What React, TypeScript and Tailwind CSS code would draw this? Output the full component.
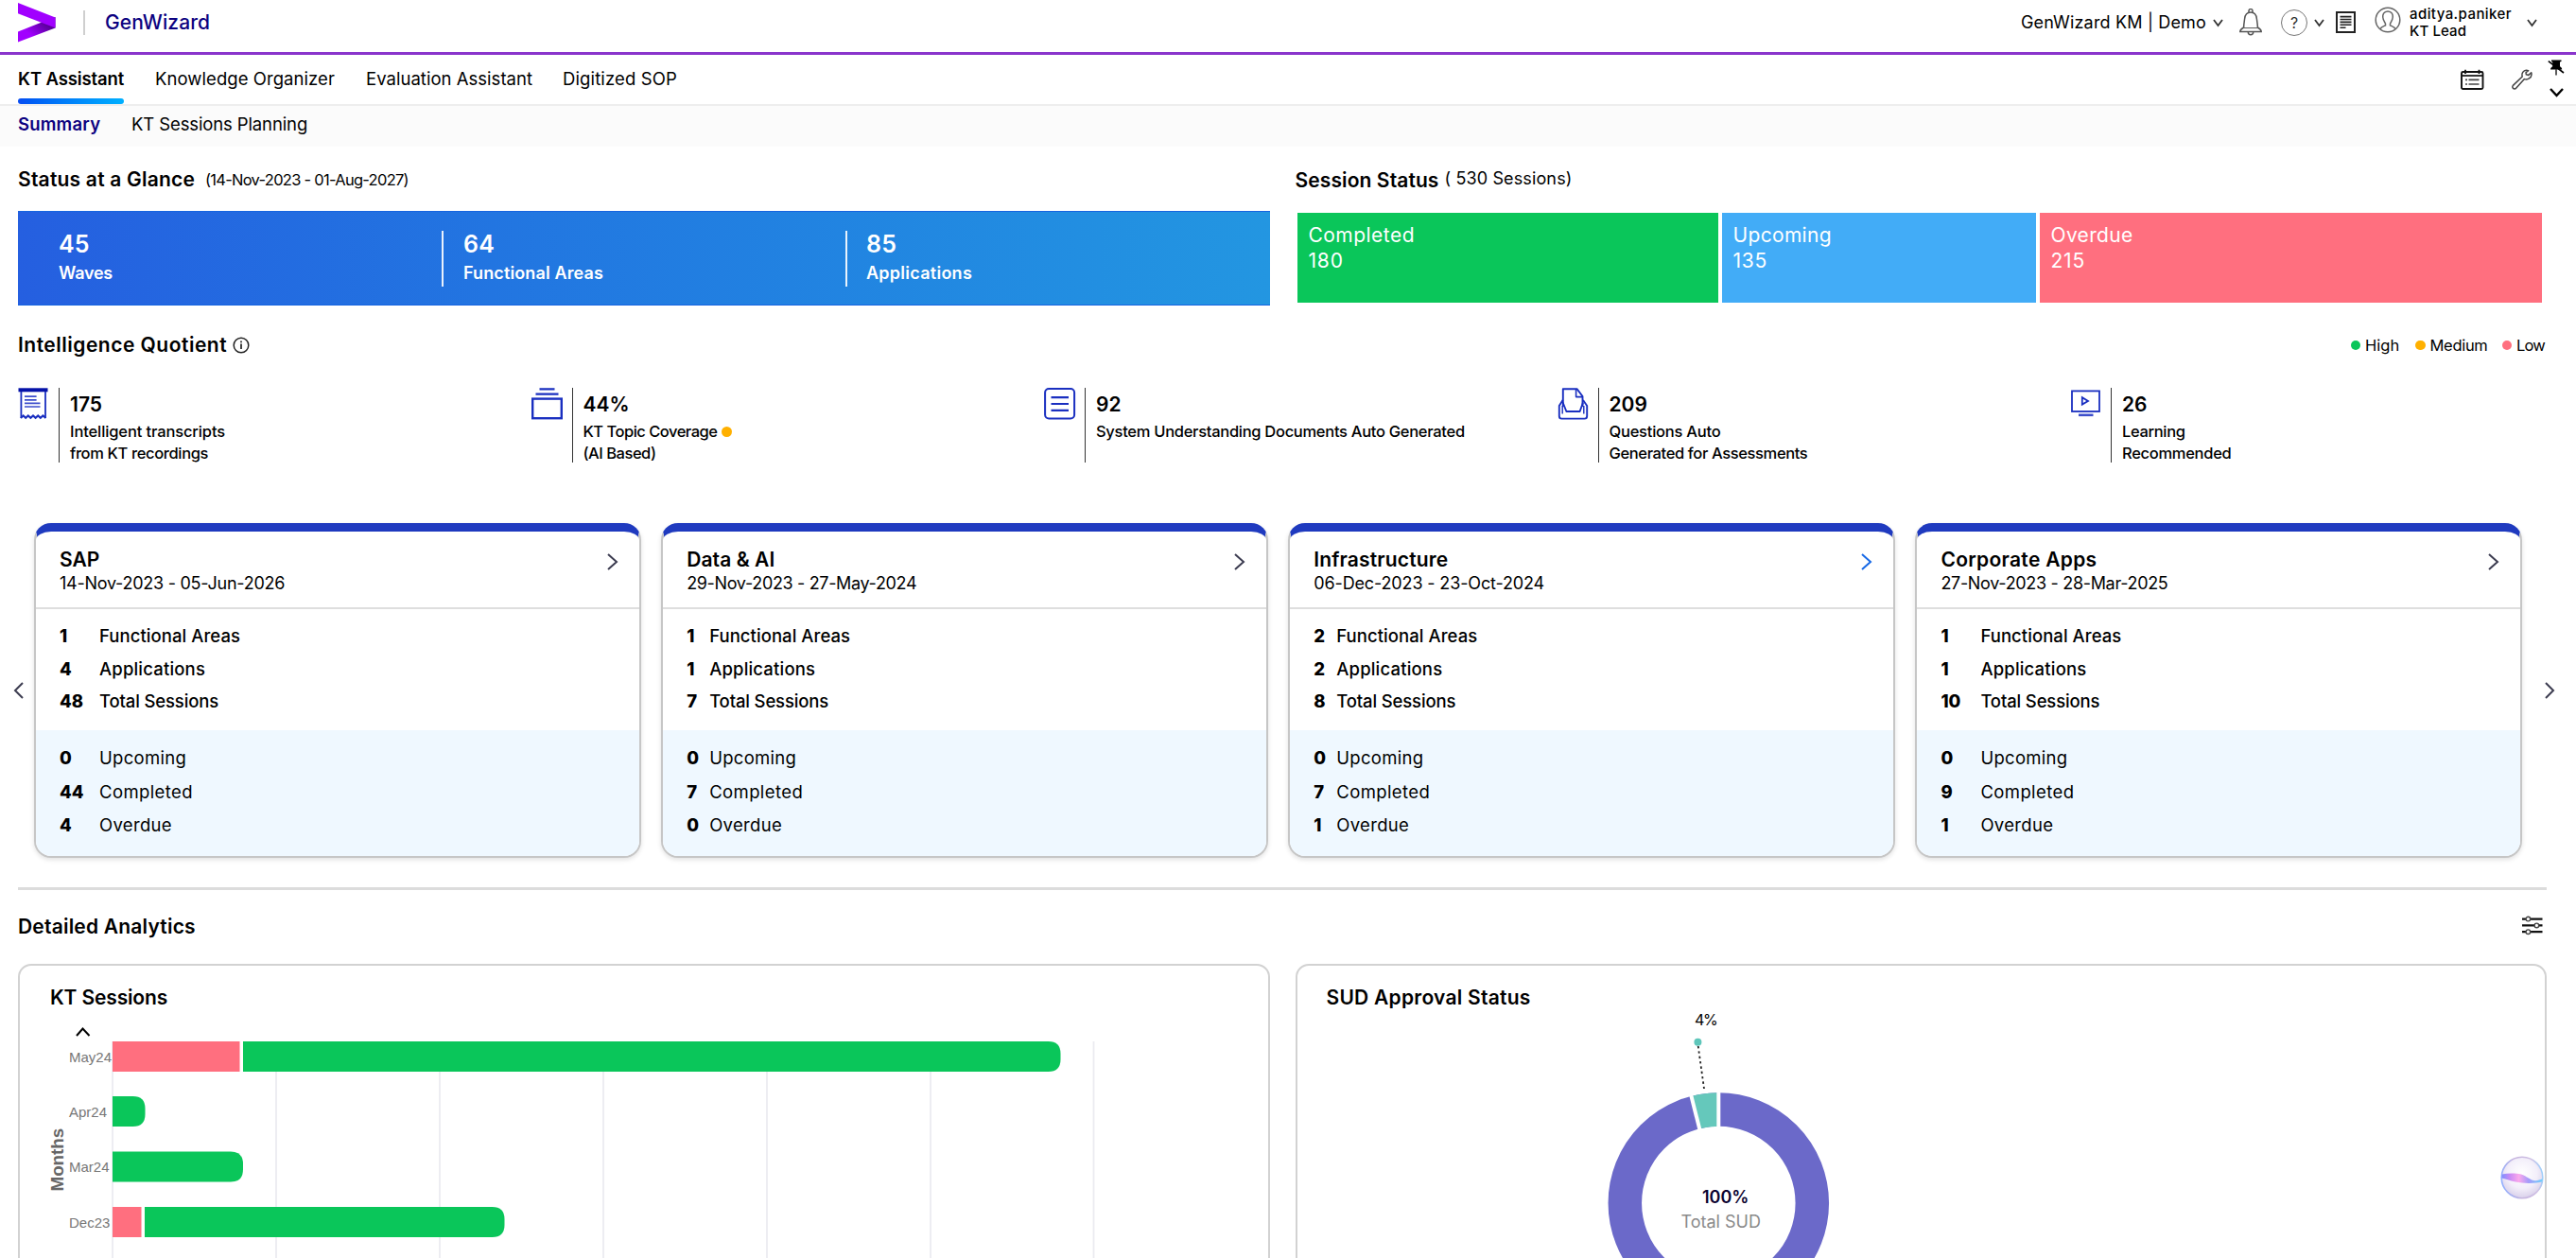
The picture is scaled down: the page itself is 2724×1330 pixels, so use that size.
import React from "react";

const heading = "text-[21px] font-semibold text-black whitespace-nowrap";

function Chevron({ w, h, dir, stroke = "#333", sw = 1.8 }: { w: number; h: number; dir: "down" | "up" | "left" | "right"; stroke?: string; sw?: number }) {
  const points = {
    down: `1,1 ${w / 2},${h - 1} ${w - 1},1`,
    up: `1,${h - 1} ${w / 2},1 ${w - 1},${h - 1}`,
    left: `${w - 1},1 1,${h / 2} ${w - 1},${h - 1}`,
    right: `1,1 ${w - 1},${h / 2} 1,${h - 1}`,
  }[dir];
  return (
    <svg width={w} height={h} viewBox={`0 0 ${w} ${h}`} fill="none" className="shrink-0 overflow-visible">
      <polyline points={points} stroke={stroke} strokeWidth={sw} />
    </svg>
  );
}

function Logo() {
  return (
    <svg width="40" height="42" viewBox="0 0 40 42" className="shrink-0">
      <defs>
        <linearGradient id="fold" x1="0" y1="0.9" x2="1" y2="0.1">
          <stop offset="0.3" stopColor="#a100ff" />
          <stop offset="0.85" stopColor="#4c0087" />
        </linearGradient>
      </defs>
      <path d="M0 30.5 L24.5 20.8 L39.5 15 V26.5 L0 41.5 Z" fill="url(#fold)" />
      <path d="M0 0 L39.5 15.5 V26.5 L24.5 20.8 L0 11.3 Z" fill="#a100ff" />
    </svg>
  );
}

function BellIcon() {
  return (
    <svg width="24" height="29" viewBox="0 0 24 29" fill="none" stroke="#555" strokeWidth="1.5" className="shrink-0">
      <path d="M10 4.2 V2.6 a2 2 0 0 1 4 0 V4.2" />
      <path d="M4.6 20.5 C4.6 17 5.2 14 5.6 11 C6 6.6 8.4 4 12 4 S18 6.6 18.4 11 C18.8 14 19.4 17 19.4 20.5" />
      <path d="M4.6 20 C2 21.5 0.8 22.3 0.8 24.6 H23.2 C23.2 22.3 22 21.5 19.4 20" />
      <path d="M4.4 20.6 H19.6" strokeWidth="1" />
      <path d="M9.3 25 a2.7 2.7 0 0 0 5.4 0" />
    </svg>
  );
}

function HelpIcon() {
  return (
    <span className="flex size-[28px] shrink-0 items-center justify-center rounded-full border-[1.5px] border-[#777] text-[16px] leading-none text-[#333]">?</span>
  );
}

function DocIcon() {
  return (
    <svg width="21" height="23" viewBox="0 0 21 23" fill="none" stroke="#222" className="shrink-0">
      <rect x="1" y="1" width="19" height="21" strokeWidth="2" />
      <path d="M4.5 5.6 H16.5 M4.5 8.5 H16.5 M4.5 11.4 H16.5 M4.5 14.3 H16.5 M4.5 17.2 H10.5" strokeWidth="1.6" />
    </svg>
  );
}

function UserIcon() {
  return (
    <svg width="28" height="28" viewBox="0 0 28 28" fill="none" stroke="#666" strokeWidth="1.5" className="shrink-0">
      <circle cx="14" cy="14" r="12.8" />
      <path d="M6 23.8 C6.6 21.6 8.4 21.2 11.6 19.8 C12.2 18.6 11.4 17.6 10.4 16 C8.6 12.8 8.2 9.6 9.6 7.2 C11.4 4.2 16.6 4.2 18.4 7.2 C19.8 9.6 19.4 12.8 17.6 16 C16.6 17.6 15.8 18.6 16.4 19.8 C19.6 21.2 21.4 21.6 22 23.8" />
    </svg>
  );
}

function CalendarIcon() {
  return (
    <svg width="25" height="22" viewBox="0 0 25 22" fill="none" stroke="#111" className="shrink-0">
      <rect x="1" y="3" width="22.5" height="18" rx="1.5" strokeWidth="1.9" />
      <path d="M1 7 H23.5" strokeWidth="1.7" />
      <path d="M5 0.8 V5 M19.5 0.8 V5" strokeWidth="1.8" />
      <path d="M5 11.4 H7 M5 16 H7 M8.5 11.4 H19.5 M8.5 16 H19.5" strokeWidth="1.6" stroke="#444" />
    </svg>
  );
}

function WrenchIcon() {
  return (
    <svg width="22" height="22" viewBox="0 0 22 22" fill="none" stroke="#444" strokeWidth="1.5" strokeLinejoin="round" className="shrink-0">
      <path d="M17.6 1.6 C14.6 0.4 11.4 2.2 11 5.2 C10.8 6.4 11 7.2 11.2 8 L1.4 17.4 C0.6 18.4 0.8 19.6 1.5 20.4 C2.4 21.2 3.8 21.2 4.6 20.3 L13.4 10.6 C17 11.8 20.8 9.4 21 5.6 C21 5 20.9 4.4 20.7 3.8 L17.8 6.4 L15.4 5.8 L15 3.8 Z" />
    </svg>
  );
}

function PinIcon() {
  return (
    <svg width="18" height="17" viewBox="0 0 18 17" className="shrink-0">
      <path d="M4 0.5 H14.5 V2 L13 2.6 V7.2 C14.6 8 15.2 9 15.2 10.4 H3 C3 9 3.8 8 5.2 7.2 V2.6 L4 2 Z" fill="#000" />
      <path d="M9 10 V16.5" stroke="#333" strokeWidth="1.6" />
      <path d="M0.8 1.6 L17 14" stroke="#000" strokeWidth="1.6" />
    </svg>
  );
}

function FilterIcon() {
  return (
    <svg width="22" height="21" viewBox="0 0 22 21" fill="#fff" stroke="#111" className="shrink-0">
      <path d="M0 3.6 H21.5 M0 10.4 H21.5 M0 17.2 H21.5" strokeWidth="2.2" />
      <circle cx="6.4" cy="3.6" r="2.3" strokeWidth="1.4" stroke="#444" />
      <circle cx="15.4" cy="10.4" r="2.3" strokeWidth="1.4" stroke="#444" />
      <circle cx="6.4" cy="17.2" r="2.3" strokeWidth="1.4" stroke="#444" />
    </svg>
  );
}

const blue = "#1a2fc0";

function TranscriptIcon() {
  return (
    <svg width="33" height="34" viewBox="0 0 33 34" fill="none" stroke={blue} className="shrink-0">
      <rect x="0.5" y="0.3" width="31" height="4" fill="#0512a8" stroke="none" />
      <path d="M3.4 4 V32 M29 4 V32" strokeWidth="1.8" />
      <path d="M3 32 L5.6 29.4 L8.2 31.8 L10.8 29.4 L13.4 31.8 L16 29.4 L18.6 31.8 L21.2 29.4 L23.8 31.8 L26.4 29.4 L29.4 32" strokeWidth="2" />
      <path d="M7 9.2 H19.6 M7 12.8 H19.6 M7 16.4 H23.5 M7 20 H23.5" strokeWidth="1.7" stroke="#3d4ecb" />
    </svg>
  );
}

function StackIcon() {
  return (
    <svg width="33" height="34" viewBox="0 0 33 34" fill="none" stroke={blue} className="shrink-0">
      <path d="M8.5 1.4 H24.5 M4.5 6.6 H28.5" strokeWidth="2.4" />
      <rect x="1.2" y="11.6" width="30.6" height="20.6" strokeWidth="2.4" />
    </svg>
  );
}

function ListDocIcon() {
  return (
    <svg width="34" height="34" viewBox="0 0 34 34" fill="none" stroke={blue} className="shrink-0">
      <rect x="1.1" y="1.1" width="31" height="31.4" rx="4" strokeWidth="2" />
      <path d="M7.5 10.2 H26 M7.5 17 H26 M7.5 23.8 H26" strokeWidth="2.2" />
    </svg>
  );
}

function InboxIcon() {
  return (
    <svg width="33" height="34" viewBox="0 0 33 34" fill="none" stroke={blue} strokeWidth="1.9" strokeLinejoin="round" className="shrink-0">
      <path d="M5.8 20 V1.2 H20.5 L26.5 9 V20" />
      <path d="M19.6 1.4 V9.6 H26.6" strokeWidth="1.6" />
      <path d="M5.6 13 L1.8 19 V30 C1.8 31.6 2.8 32.6 4.4 32.6 H28.6 C30.2 32.6 31.2 31.6 31.2 30 V19 L27 13" />
      <path d="M5.6 15.5 L9.4 25 H23.6 L27 15.5" />
      <path d="M5.2 19 V27.5 M27.8 19 V27.5" strokeWidth="1.4" />
    </svg>
  );
}

function VideoIcon() {
  return (
    <svg width="32" height="34" viewBox="0 0 32 34" fill="none" stroke={blue} className="shrink-0">
      <rect x="2" y="3.4" width="29" height="21.6" strokeWidth="1.8" />
      <path d="M12.8 10.2 V17.6 L19 13.9 Z" strokeWidth="1.8" />
      <path d="M9 28.8 H24.5" strokeWidth="2.6" stroke="#3d4ecb" />
    </svg>
  );
}

const metrics = [
  { icon: <TranscriptIcon />, value: "175", lines: ["Intelligent transcripts", "from KT recordings"], fit: ["tracking-[-0.12px]", "tracking-[-0.36px]"] },
  { icon: <StackIcon />, value: "44%", lines: ["KT Topic Coverage", "(AI Based)"], fit: ["tracking-[-0.5px]", "tracking-[-0.48px]"], dot: true },
  { icon: <ListDocIcon />, value: "92", lines: ["System Understanding Documents Auto Generated"], fit: ["tracking-[-0.29px]"] },
  { icon: <InboxIcon />, value: "209", lines: ["Questions Auto", "Generated for Assessments"], fit: ["tracking-[-0.23px]", "tracking-[-0.37px]"] },
  { icon: <VideoIcon />, value: "26", lines: ["Learning", "Recommended"], fit: ["tracking-[-0.35px]", "tracking-[-0.29px]"] },
];

const cards = [
  { name: "SAP", dates: "14-Nov-2023 - 05-Jun-2026", top: [1, 4, 48], bottom: [0, 44, 4], col: "w-[42px]", arrow: "#3c3c50", fit: "tracking-[0px]", dateFit: "tracking-[-0.26px]" },
  { name: "Data & AI", dates: "29-Nov-2023 - 27-May-2024", top: [1, 1, 7], bottom: [0, 7, 0], col: "w-[24px]", arrow: "#3c3c50", fit: "tracking-[0.1px]", dateFit: "tracking-[-0.34px]" },
  { name: "Infrastructure", dates: "06-Dec-2023 - 23-Oct-2024", top: [2, 2, 8], bottom: [0, 7, 1], col: "w-[24px]", arrow: "#1769e6", fit: "tracking-[0.15px]", dateFit: "tracking-[-0.14px]" },
  { name: "Corporate Apps", dates: "27-Nov-2023 - 28-Mar-2025", top: [1, 1, 10], bottom: [0, 9, 1], col: "w-[42px]", arrow: "#3c3c50", fit: "tracking-[0.3px]", dateFit: "tracking-[-0.32px]" },
];

const topRows = [
  { label: "Functional Areas", fit: "tracking-[0.06px]" },
  { label: "Applications", fit: "tracking-[0.18px]" },
  { label: "Total Sessions", fit: "tracking-[-0.14px]" },
];
const bottomRows = [
  { label: "Upcoming", fit: "tracking-[0.29px]" },
  { label: "Completed", fit: "tracking-[0.4px]" },
  { label: "Overdue", fit: "tracking-[0.33px]" },
];

function WaveCard({ card }: { card: (typeof cards)[number] }) {
  return (
    <article className="h-[354px] min-w-0 flex-1 overflow-hidden rounded-[18px] border-2 border-t-[9px] border-[#c6c6c6] border-t-[#1f3abf] bg-white shadow-[0_2px_5px_rgba(0,0,0,0.12)]">
      <div className="flex h-[82px] justify-between border-b-2 border-[#dedede] pt-[17px] pr-[23px] pl-[25px]">
        <div>
          <h3 className={`${heading} leading-[26px] ${card.fit}`}>{card.name}</h3>
          <p className={`text-[18px] leading-[24px] whitespace-nowrap ${card.dateFit}`}>{card.dates}</p>
        </div>
        <div className="pt-[6px]">
          <Chevron w={11} h={18} dir="right" stroke={card.arrow} sw={2} />
        </div>
      </div>
      <div className="h-[128px] pt-[11px] pl-[25px]">
        {topRows.map((r, i) => (
          <div key={r.label} className="flex text-[18.5px] leading-[34.5px]">
            <b className={`${card.col} shrink-0 font-extrabold`}>{card.top[i]}</b>
            <span className={`font-medium ${r.fit}`}>{r.label}</span>
          </div>
        ))}
      </div>
      <div className="h-[133px] bg-[#eff8ff] pt-[12px] pl-[25px]">
        {bottomRows.map((r, i) => (
          <div key={r.label} className="flex text-[18.5px] leading-[35.5px]">
            <b className={`${card.col} shrink-0 font-extrabold`}>{card.bottom[i]}</b>
            <span className={r.fit}>{r.label}</span>
          </div>
        ))}
      </div>
    </article>
  );
}

const bars = [
  { month: "May24", y: 1101, red: 134.5, start: 257, end: 1121.5 },
  { month: "Apr24", y: 1159, red: 0, start: 119, end: 153.5 },
  { month: "Mar24", y: 1217.5, red: 0, start: 119, end: 257 },
  { month: "Dec23", y: 1276, red: 30.5, start: 153, end: 533.5 },
];

function SessionsChart() {
  const h = 32;
  const r = 13;
  return (
    <svg width="1320" height="252" viewBox="21 1078 1320 252" className="block overflow-visible">
      {[119, 292, 465, 638, 811, 984, 1156.5].map((x) => (
        <line key={x} x1={x} x2={x} y1="1101" y2="1330" stroke="#ebebf1" strokeWidth="1.8" />
      ))}
      <polyline points="81,1095 87.5,1087.5 94.5,1095" fill="none" stroke="#000" strokeWidth="2" />
      {bars.map((b) => (
        <g key={b.month}>
          <text x="73" y={b.y + 21.5} fontFamily="Liberation Sans" fontSize="15" fill="#777">{b.month}</text>
          {b.red > 0 && <rect x="119" y={b.y} width={b.red} height={h} fill="#ff6f7f" />}
          <path
            d={`M${b.start} ${b.y} H${b.end - r} Q${b.end} ${b.y} ${b.end} ${b.y + r} V${b.y + h - r} Q${b.end} ${b.y + h} ${b.end - r} ${b.y + h} H${b.start} Z`}
            fill="#0ac65a"
          />
        </g>
      ))}
      <text transform="translate(66.5 1259.5) rotate(-90)" fontFamily="Liberation Sans" fontWeight="700" fontSize="18.8" fill="#666">Months</text>
    </svg>
  );
}

function ApprovalChart() {
  return (
    <svg width="1319" height="252" viewBox="1372 1078 1319 252" className="block overflow-visible">
      <circle cx="1817.3" cy="1272" r="99" fill="none" stroke="#6b69c9" strokeWidth="35.5" />
      <path d="M1817.3 1155.3 A116.7 116.7 0 0 0 1788.5 1158.9 L1797.2 1193.2 A81.3 81.3 0 0 1 1817.3 1190.7 Z" fill="#65c8bb" />
      <line x1="1817.3" y1="1150" x2="1817.3" y2="1194" stroke="#fff" strokeWidth="4" />
      <line x1="1787.4" y1="1154.8" x2="1797.7" y2="1195.4" stroke="#fff" strokeWidth="4" />
      <line x1="1795.7" y1="1106" x2="1802" y2="1151" stroke="#222" strokeWidth="1.8" strokeDasharray="2.4 3" />
      <circle cx="1795.4" cy="1101.8" r="4" fill="#5ec6ba" />
      <g fontFamily="Inter">
        <text x="1792" y="1084.3" fontSize="16" letterSpacing="-1.4">4%</text>
        <text x="1800" y="1271.7" fontSize="18" fontWeight="600" fill="#0b0330">100%</text>
        <text x="1777.5" y="1298.3" fontSize="18" fill="#8a8a8a">Total SUD</text>
      </g>
    </svg>
  );
}

function AssistantOrb() {
  return (
    <svg width="46" height="46" viewBox="0 0 46 46" className="absolute top-[1222px] left-[2644px]">
      <defs>
        <radialGradient id="orbFill" cx="0.5" cy="0.4" r="0.6">
          <stop offset="0" stopColor="#ffffff" />
          <stop offset="0.6" stopColor="#f3effa" />
          <stop offset="1" stopColor="#d9d0ea" />
        </radialGradient>
        <linearGradient id="orbRim" x1="0" y1="0.6" x2="1" y2="0.4">
          <stop offset="0" stopColor="#93b0ff" />
          <stop offset="0.4" stopColor="#c6b4de" />
          <stop offset="0.8" stopColor="#cfc0e4" />
          <stop offset="1" stopColor="#9fd0fb" />
        </linearGradient>
        <linearGradient id="orbWave" x1="0" y1="0" x2="1" y2="0">
          <stop offset="0" stopColor="#7f8fff" />
          <stop offset="0.2" stopColor="#c98bf5" />
          <stop offset="0.42" stopColor="#fba9ec" />
          <stop offset="0.65" stopColor="#a79bfa" />
          <stop offset="1" stopColor="#6fd0fb" />
        </linearGradient>
      </defs>
      <circle cx="23" cy="23" r="21.8" fill="url(#orbFill)" stroke="url(#orbRim)" strokeWidth="1.6" />
      <path d="M1.5 19.5 C8 18.4 16 18.2 22 19.6 C28 21.6 33 27 38 26.2 C41 25.6 43 24.6 44.6 24.4 L44 27.6 C38 29.2 24 29.4 16 27.6 C10 26.2 5 24 1.5 23.4 Z" fill="url(#orbWave)" />
    </svg>
  );
}

function Dot({ className }: { className: string }) {
  return <span className={`size-[10.5px] shrink-0 rounded-full ${className}`} />;
}

export default function App() {
  return (
    <div className="relative h-[1330px] w-[2724px] overflow-hidden bg-white font-[Inter,sans-serif] text-black">
      <header className="h-[58px] border-b-[3px] border-[#8a35cc] bg-white">
        <div className="flex h-[47px] items-center pl-[19px] text-[18px] whitespace-nowrap">
          <Logo />
          <span className="ml-[29px] h-[26px] w-[2px] bg-[#cfcfcf]" />
          <span className="ml-[21px] text-[21px] font-medium text-[#0c0180] tracking-[0.08px]">GenWizard</span>
          <div className="ml-auto flex items-center pr-[41px]">
            <span className="tracking-[0.17px]">GenWizard KM | Demo</span>
            <span className="ml-[7px]"><Chevron w={11} h={8} dir="down" /></span>
            <span className="ml-[17px]"><BellIcon /></span>
            <span className="ml-[20px]"><HelpIcon /></span>
            <span className="ml-[7px]"><Chevron w={11} h={8} dir="down" /></span>
            <span className="ml-[12px]"><DocIcon /></span>
            <span className="mb-[6px] ml-[20px]"><UserIcon /></span>
            <div className="ml-[9px] w-[108px] text-[15px] leading-[17.3px] font-medium text-black">
              <div className="tracking-[0.43px]">aditya.paniker</div>
              <div className="tracking-[0.1px]">KT Lead</div>
            </div>
            <span className="ml-[16px]"><Chevron w={11} h={8} dir="down" /></span>
          </div>
        </div>
      </header>

      <nav className="flex h-[54px] justify-between border-b-2 border-[#eeeeee] pl-[19px]">
        <div className="flex text-[18.5px] leading-[51px] whitespace-nowrap">
          <div className="flex h-[52px] w-[112px] flex-col justify-between">
            <span className="h-[46px] font-semibold tracking-[-0.13px]">KT Assistant</span>
            <span className="h-[6px] rounded-[3px] bg-linear-to-r from-[#0a4df2] to-[#00b0ff]" />
          </div>
          <span className="ml-[33px] w-[190px] tracking-[0.06px]">Knowledge Organizer</span>
          <span className="ml-[33px] w-[176px] tracking-[0.03px]">Evaluation Assistant</span>
          <span className="ml-[32px] tracking-[0.13px]">Digitized SOP</span>
        </div>
        <div className="flex pr-[12px]">
          <span className="pt-[15px]"><CalendarIcon /></span>
          <span className="ml-[29px] pt-[15px]"><WrenchIcon /></span>
          <div className="ml-[16px] flex flex-col items-center pt-[5px]">
            <PinIcon />
            <span className="mt-[13px]"><Chevron w={15} h={9} dir="down" stroke="#000" sw={2.4} /></span>
          </div>
        </div>
      </nav>

      <div className="flex h-[43px] bg-[#fbfbfb] pl-[19px] text-[18.5px] leading-[39px]">
        <span className="w-[120px] font-semibold tracking-[0.2px] text-[#0c0180]">Summary</span>
        <span className="tracking-[-0.12px]">KT Sessions Planning</span>
      </div>

      <main className="pr-[31px] pl-[19px]">
        <section className="grid grid-cols-2 gap-[27px]">
          <div>
            <div className="flex h-[68px] leading-[70px]">
              <h2 className={`${heading} w-[198px] tracking-[0.22px]`}>Status at a Glance</h2>
              <span className="text-[16.5px] tracking-[-0.73px] whitespace-nowrap">(14-Nov-2023 - 01-Aug-2027)</span>
            </div>
            <div className="flex h-[100px] border-y border-[#1664e0] bg-linear-to-r from-[#255fe0] to-[#2396e1] pt-[20px] text-white">
              <div className="h-[59px] w-[448px] pl-[43px]">
                <div className="-mt-[2px] text-[25px] leading-[32px] font-semibold tracking-[0.2px]">45</div>
                <div className="text-[18px] leading-[30px] font-semibold tracking-[-0.23px]">Waves</div>
              </div>
              <div className="h-[59px] w-[427px] border-l-2 border-white/90 pl-[21px]">
                <div className="-mt-[2px] text-[25px] leading-[32px] font-semibold tracking-[0.2px]">64</div>
                <div className="text-[18px] leading-[30px] font-semibold tracking-[0.12px]">Functional Areas</div>
              </div>
              <div className="h-[59px] border-l-2 border-white/90 pl-[20px]">
                <div className="-mt-[2px] text-[25px] leading-[32px] font-semibold tracking-[0.2px]">85</div>
                <div className="text-[18px] leading-[30px] font-semibold tracking-[0.26px]">Applications</div>
              </div>
            </div>
          </div>
          <div>
            <div className="flex h-[68px]">
              <h2 className={`${heading} w-[158px] leading-[72px] tracking-[0.1px]`}>Session Status</h2>
              <span className="text-[18px] leading-[68px] tracking-[0.13px]">( 530 Sessions)</span>
            </div>
            <div className="flex h-[97px] pt-[2px] pr-[5px] pl-[2px] text-[21px] leading-[27px] text-white">
              <div className="w-[445px] bg-[#0ac65a] pt-[10px] pl-[12px]">
                <div className="tracking-[0.47px]">Completed</div>
                <div className="tracking-[0.8px]">180</div>
              </div>
              <div className="ml-[4px] w-[332px] bg-[#42acf7] pt-[10px] pl-[12px]">
                <div className="tracking-[0.33px]">Upcoming</div>
                <div className="tracking-[0.8px]">135</div>
              </div>
              <div className="ml-[4px] flex-1 bg-[#ff6f7f] pt-[10px] pl-[12px]">
                <div className="tracking-[0.33px]">Overdue</div>
                <div className="tracking-[0.8px]">215</div>
              </div>
            </div>
          </div>
        </section>

        <section>
          <div className="flex h-[87px] justify-between leading-[84px]">
            <div className="flex">
              <h2 className={`${heading} w-[227px] tracking-[0.5px]`}>Intelligence Quotient</h2>
              <svg width="18" height="18" viewBox="0 0 18 18" fill="none" stroke="#222" className="mt-[33px]">
                <circle cx="9" cy="9" r="7.8" strokeWidth="1.5" />
                <path d="M9 7.6 V13 M9 4.6 V6.2" strokeWidth="1.7" />
              </svg>
            </div>
            <div className="flex h-[84px] items-center text-[16.5px]">
              <Dot className="bg-[#0ac65a]" />
              <span className="ml-[5px] w-[53px]">High</span>
              <Dot className="bg-[#ffb000]" />
              <span className="ml-[5px] w-[76px] tracking-[-0.31px]">Medium</span>
              <Dot className="bg-[#ff6f7f]" />
              <span className="ml-[5px] w-[32px] tracking-[-0.8px]">Low</span>
            </div>
          </div>
          <div className="flex h-[79px]">
            {metrics.map((m) => (
              <div key={m.value} className="flex w-[542.5px] shrink-0">
                <div className="w-[43px]">{m.icon}</div>
                <div className="border-l-[1.6px] border-[#333] pt-[2px] pl-[11px]">
                  <div className="text-[21px] leading-[32.5px] font-semibold">{m.value}</div>
                  {m.lines.map((line, i) => (
                    <div key={line} className="flex items-center text-[16.5px] leading-[23.5px] font-medium whitespace-nowrap">
                      <span className={m.fit[i]}>{line}</span>
                      {m.dot && i === 0 && <Dot className="ml-[5px] bg-[#ffb000]" />}
                    </div>
                  ))}
                </div>
              </div>
            ))}
          </div>
        </section>

        <section className="mt-[64px] flex items-center">
          <div className="-ml-[4px] w-[21px]"><Chevron w={10} h={18} dir="left" stroke="#3c3c50" sw={2} /></div>
          <div className="flex w-[2631px] gap-[21.5px]">
            {cards.map((c) => <WaveCard key={c.name} card={c} />)}
          </div>
          <div className="-mr-[10px] ml-[24px]"><Chevron w={10} h={18} dir="right" stroke="#3c3c50" sw={2} /></div>
        </section>

        <div className="mt-[31px] h-[3px] bg-[#dcdcdc]" />

        <div className="flex h-[78px] items-center justify-between pr-[4px]">
          <h2 className={`${heading} tracking-[0.2px]`}>Detailed Analytics</h2>
          <span className="mb-[3px]"><FilterIcon /></span>
        </div>

        <section className="grid grid-cols-2 gap-[27px]">
          <div className="h-[340px] rounded-[14px] border-2 border-[#d2d2d2]">
            <h2 className={`${heading} h-[57px] pl-[32px] leading-[67px] tracking-[-0.15px]`}>KT Sessions</h2>
            <SessionsChart />
          </div>
          <div className="h-[340px] rounded-[14px] border-2 border-[#d2d2d2]">
            <h2 className={`${heading} h-[57px] pl-[31px] leading-[67px] tracking-[0.25px]`}>SUD Approval Status</h2>
            <ApprovalChart />
          </div>
        </section>
      </main>

      <AssistantOrb />
    </div>
  );
}
